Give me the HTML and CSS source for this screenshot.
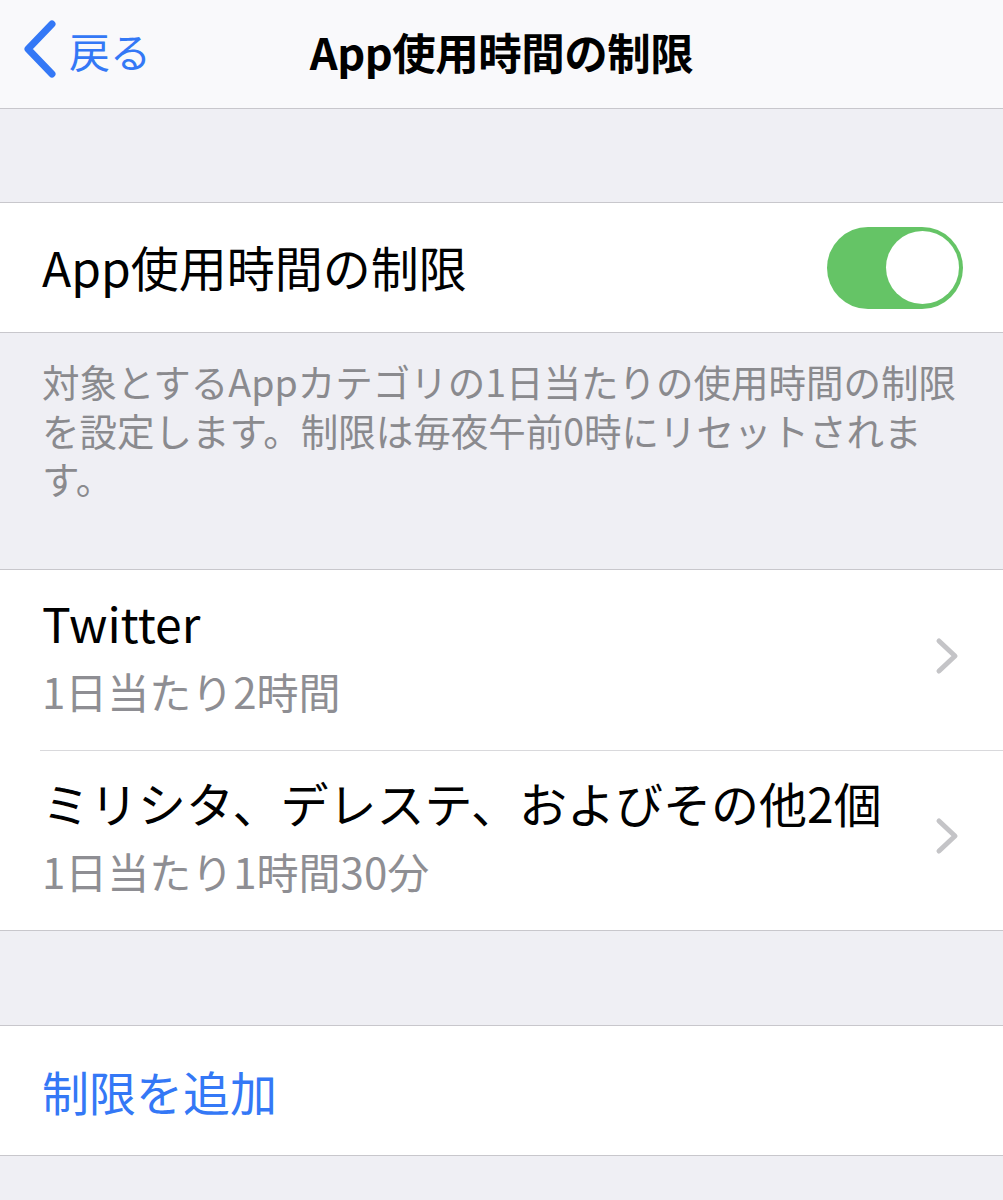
FILE: index.html
```html
<!DOCTYPE html>
<html lang="ja">
<head>
    <meta charset="UTF-8">
    <meta name="viewport" content="width=device-width, initial-scale=1.0">
    <title>App使用時間の制限</title>
    <link rel="stylesheet" href="styles.css">
</head>
<body>
    <header class="nav-bar">
        <a class="back" href="#">
            <svg class="back-icon" width="36" height="60" viewBox="0 0 36 60">
                <polyline points="29,4 5,29 29,54" fill="none" stroke="#3478f6" stroke-width="7" stroke-linecap="round" stroke-linejoin="round"/>
            </svg>
            <span>戻る</span>
        </a>
        <h1 class="nav-title">App使用時間の制限</h1>
    </header>

    <section class="group first-group">
        <div class="cell toggle-cell">
            <span class="cell-title">App使用時間の制限</span>
            <div class="toggle on"><div class="knob"></div></div>
        </div>
    </section>
    <p class="group-footer">対象とするAppカテゴリの1日当たりの使用時間の制限を設定します。制限は毎夜午前0時にリセットされます。</p>

    <section class="group">
        <div class="cell limit-cell">
            <div class="cell-text">
                <div class="cell-title">Twitter</div>
                <div class="cell-sub">1日当たり2時間</div>
            </div>
            <svg class="chevron" width="24" height="38" viewBox="0 0 24 38">
                <polyline points="4,4 20,19 4,34" fill="none" stroke="#c4c4c7" stroke-width="5" stroke-linecap="round" stroke-linejoin="round"/>
            </svg>
        </div>
        <div class="cell limit-cell">
            <div class="cell-text">
                <div class="cell-title">ミリシタ、デレステ、およびその他2個</div>
                <div class="cell-sub">1日当たり1時間30分</div>
            </div>
            <svg class="chevron" width="24" height="38" viewBox="0 0 24 38">
                <polyline points="4,4 20,19 4,34" fill="none" stroke="#c4c4c7" stroke-width="5" stroke-linecap="round" stroke-linejoin="round"/>
            </svg>
        </div>
    </section>

    <section class="group last-group">
        <div class="cell add-cell">
            <span class="add-link">制限を追加</span>
        </div>
    </section>
</body>
</html>
```

FILE: styles.css
```css
body {
    margin: 0;
    background-color: #efeff4;
    font-family: "Noto Sans CJK JP", "Noto Sans", sans-serif;
    color: #000;
    min-height: 1200px;
}
.nav-bar {
    position: relative;
    height: 108px;
    background-color: #f9f9fb;
    border-bottom: 1px solid #c8c7cc;
    display: flex;
    align-items: center;
    justify-content: center;
    box-sizing: content-box;
}
.back {
    position: absolute;
    left: 23px;
    top: 20px;
    display: flex;
    align-items: center;
    gap: 10px;
    color: #3478f6;
    text-decoration: none;
    font-size: 41px;
    line-height: 60px;
}
.back-icon {
    display: block;
}
.nav-title {
    margin: 0 0 6px;
    font-size: 43.5px;
    font-weight: 700;
    letter-spacing: -0.5px;
}
.group {
    background-color: #fff;
    border-top: 1px solid #c8c7cc;
    border-bottom: 1px solid #c8c7cc;
}
.first-group {
    margin-top: 93px;
}
.cell {
    display: flex;
    align-items: center;
    padding-left: 42px;
}
.cell-title {
    font-size: 48px;
    line-height: 60px;
}
.toggle-cell {
    height: 129px;
    padding-right: 40px;
    justify-content: space-between;
}
.toggle-cell .cell-title {
    margin-bottom: 3px;
}
.toggle {
    width: 136px;
    height: 82px;
    border-radius: 41px;
    background-color: #65c466;
    display: flex;
    align-items: center;
    justify-content: flex-end;
    padding: 0 4px;
    box-sizing: border-box;
}
.knob {
    width: 73px;
    height: 73px;
    border-radius: 50%;
    background-color: #fff;
}
.group-footer {
    margin: 0;
    padding: 24px 42px 66px 42px;
    font-size: 37.5px;
    line-height: 48.5px;
    color: #8a8a8e;
}
.limit-cell {
    position: relative;
    padding-top: 22px;
    padding-bottom: 31px;
    padding-right: 44px;
    justify-content: space-between;
}
.limit-cell + .limit-cell::before {
    content: "";
    position: absolute;
    top: 0;
    left: 40px;
    right: 0;
    border-top: 1px solid #d9d9dc;
}
.cell-sub {
    margin-top: 11px;
    font-size: 42px;
    line-height: 56px;
    color: #8e8e93;
}
.chevron {
    display: block;
    margin-top: 2px;
}
.last-group {
    margin-top: 94px;
}
.add-cell {
    height: 129px;
}
.add-link {
    font-size: 47px;
    color: #3478f6;
}
```
